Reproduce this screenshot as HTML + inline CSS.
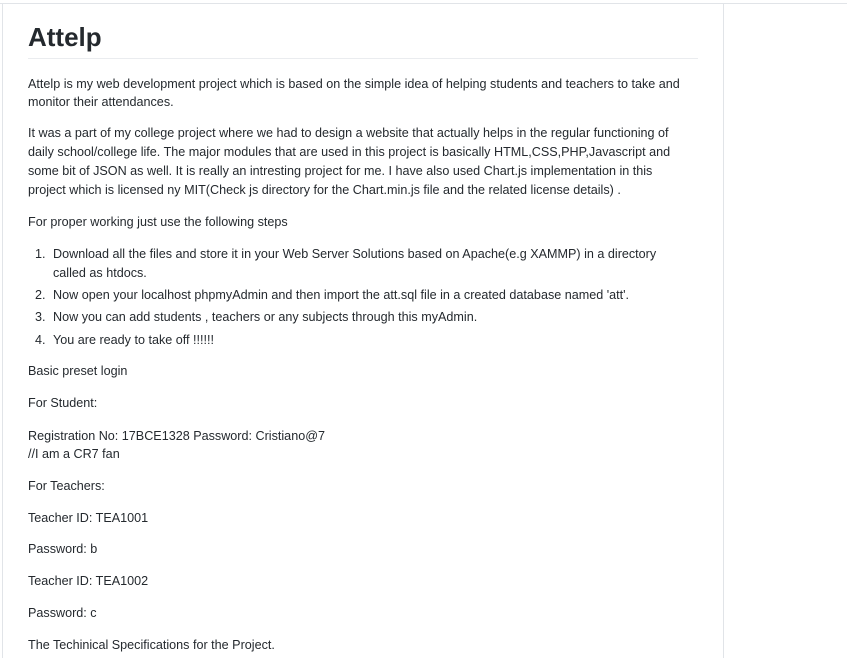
<!DOCTYPE html>
<html><head><meta charset="utf-8"><style>
body{margin:0;width:847px;height:658px;background:#fff;overflow:hidden;position:relative;font-family:"Liberation Sans",sans-serif;color:#24292e}
.t{position:absolute;left:28px;font-size:12.6px;line-height:19px;white-space:nowrap}
.li{left:53px}
.n{position:absolute;left:35px;font-size:12.6px;line-height:19px}
</style></head><body>
<div style="position:absolute;left:0;top:3px;width:847px;height:1px;background:#e1e4e8"></div>
<div style="position:absolute;left:2px;top:3px;width:1px;height:655px;background:#e1e4e8"></div>
<div style="position:absolute;left:723px;top:3px;width:1px;height:655px;background:#e1e4e8"></div>
<div style="position:absolute;left:28px;top:20px;font-size:26px;font-weight:600;line-height:34px;color:#24292e">Attelp</div>
<div style="position:absolute;left:28px;top:58px;width:670px;height:1px;background:#eaecef"></div>
<div class="t" style="top:75px">Attelp is my web development project which is based on the simple idea of helping students and teachers to take and</div>
<div class="t" style="top:93px">monitor their attendances.</div>
<div class="t" style="top:124px">It was a part of my college project where we had to design a website that actually helps in the regular functioning of</div>
<div class="t" style="top:143px">daily school/college life. The major modules that are used in this project is basically HTML,CSS,PHP,Javascript and</div>
<div class="t" style="top:162px">some bit of JSON as well. It is really an intresting project for me. I have also used Chart.js implementation in this</div>
<div class="t" style="top:181px">project which is licensed ny MIT(Check js directory for the Chart.min.js file and the related license details) .</div>
<div class="t" style="top:213px">For proper working just use the following steps</div>
<div class="n" style="top:245px">1.</div><div class="t li" style="top:245px">Download all the files and store it in your Web Server Solutions based on Apache(e.g XAMMP) in a directory</div>
<div class="t li" style="top:264px">called as htdocs.</div>
<div class="n" style="top:286px">2.</div><div class="t li" style="top:286px">Now open your localhost phpmyAdmin and then import the att.sql file in a created database named 'att'.</div>
<div class="n" style="top:308px">3.</div><div class="t li" style="top:308px">Now you can add students , teachers or any subjects through this myAdmin.</div>
<div class="n" style="top:331px">4.</div><div class="t li" style="top:331px">You are ready to take off !!!!!!</div>
<div class="t" style="top:362px">Basic preset login</div>
<div class="t" style="top:394px">For Student:</div>
<div class="t" style="top:427px">Registration No: 17BCE1328 Password: Cristiano@7</div>
<div class="t" style="top:445px">//I am a CR7 fan</div>
<div class="t" style="top:477px">For Teachers:</div>
<div class="t" style="top:509px">Teacher ID: TEA1001</div>
<div class="t" style="top:540px">Password: b</div>
<div class="t" style="top:572px">Teacher ID: TEA1002</div>
<div class="t" style="top:604px">Password: c</div>
<div class="t" style="top:636px">The Techinical Specifications for the Project.</div>
</body></html>
